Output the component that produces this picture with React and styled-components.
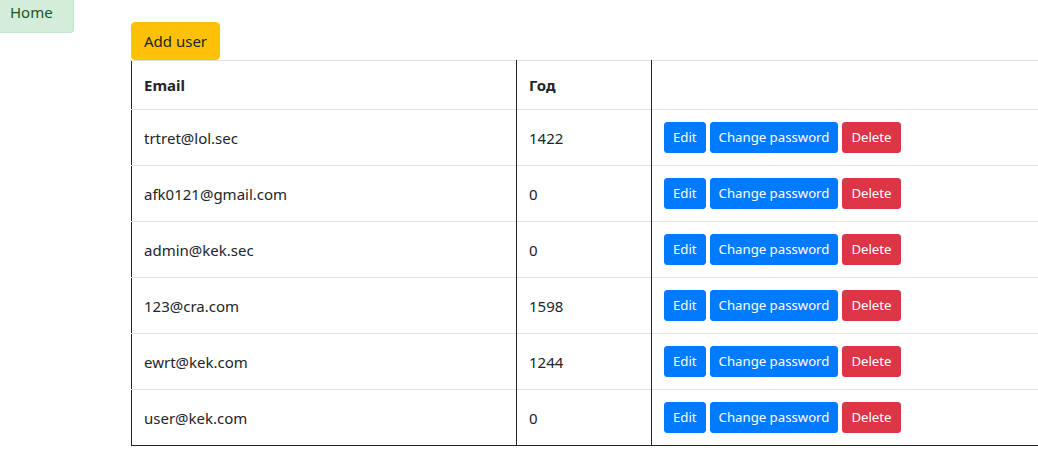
import React from "react";
import styled, { createGlobalStyle } from "styled-components";

const Global = createGlobalStyle`
  html, body { margin: 0; padding: 0; overflow: hidden; background: #fff; }
  body {
    font-family: "Noto Sans", "Open Sans", sans-serif;
    font-size: 15px;
    line-height: 24px;
    color: #212529;
  }
  * { box-sizing: border-box; }
`;

const Page = styled.div`
  display: grid;
  grid-template-columns: 131px auto;
  align-items: start;
`;

const HomeLink = styled.a`
  display: block;
  width: 74px;
  height: 33px;
  padding: 0 0 0 10px;
  line-height: 24px;
  background: #d4edda;
  color: #155724;
  border: 1px solid #c3e6cb;
  border-top: none;
  border-left: none;
  border-radius: 0 0 4px 0;
  font-size: 15px;
  text-decoration: none;
`;

const Main = styled.main`
  padding-top: 22px;
  display: flex;
  flex-direction: column;
  align-items: flex-start;
`;

const AddButton = styled.button`
  font-family: inherit;
  font-size: 15px;
  line-height: 24px;
  height: 38px;
  padding: 6px 12px;
  background: #ffc107;
  color: #212529;
  border: 1px solid #ffc107;
  border-radius: 4px;
  cursor: pointer;
`;

const Table = styled.table`
  width: 930px;
  border-collapse: collapse;
  border-left: 1px solid #212529;
  border-bottom: 1px solid #212529;
  table-layout: fixed;
`;

const Th = styled.th`
  text-align: left;
  font-weight: 700;
  padding: 12px;
  border-top: 1px solid #dee2e6;
  border-right: 1px solid #212529;
  vertical-align: middle;
  width: ${(p) => p.$w || "auto"};
  height: 49px;
`;

const Td = styled.td`
  padding: 12px;
  border-top: 1px solid #dee2e6;
  border-right: 1px solid #212529;
  vertical-align: middle;
  height: 56px;
`;

const Actions = styled.div`
  display: flex;
  gap: 4px;
`;

const SmallButton = styled.button`
  font-family: inherit;
  font-size: 13.2px;
  line-height: 21px;
  height: 31px;
  padding: 4px 8px;
  color: #fff;
  background: ${(p) => (p.$variant === "danger" ? "#dc3545" : "#007bff")};
  border: 1px solid ${(p) => (p.$variant === "danger" ? "#dc3545" : "#007bff")};
  border-radius: 3px;
  cursor: pointer;
`;

const users = [
  { email: "trtret@lol.sec", year: "1422" },
  { email: "afk0121@gmail.com", year: "0" },
  { email: "admin@kek.sec", year: "0" },
  { email: "123@cra.com", year: "1598" },
  { email: "ewrt@kek.com", year: "1244" },
  { email: "user@kek.com", year: "0" },
];

export default function App() {
  return (
    <>
      <Global />
      <Page>
        <div>
          <HomeLink href="#">Home</HomeLink>
        </div>
        <Main>
          <AddButton>Add user</AddButton>
          <Table>
            <thead>
              <tr>
                <Th $w="385px">Email</Th>
                <Th $w="135px">Год</Th>
                <Th></Th>
              </tr>
            </thead>
            <tbody>
              {users.map((u) => (
                <tr key={u.email}>
                  <Td>{u.email}</Td>
                  <Td>{u.year}</Td>
                  <Td>
                    <Actions>
                      <SmallButton>Edit</SmallButton>
                      <SmallButton>Change password</SmallButton>
                      <SmallButton $variant="danger">Delete</SmallButton>
                    </Actions>
                  </Td>
                </tr>
              ))}
            </tbody>
          </Table>
        </Main>
      </Page>
    </>
  );
}
